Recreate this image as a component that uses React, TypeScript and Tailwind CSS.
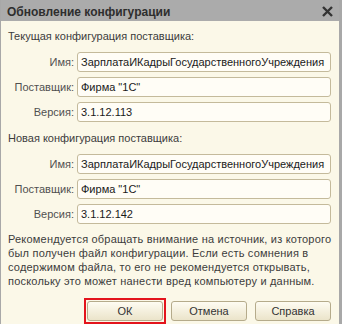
const font = { fontFamily: '"Liberation Sans", Arial, sans-serif' };

interface Field {
  label: string;
  value: string;
}

const current: Field[] = [
  { label: "Имя:", value: "ЗарплатаИКадрыГосударственногоУчреждения" },
  { label: "Поставщик:", value: 'Фирма "1С"' },
  { label: "Версия:", value: "3.1.12.113" },
];

const next: Field[] = [
  { label: "Имя:", value: "ЗарплатаИКадрыГосударственногоУчреждения" },
  { label: "Поставщик:", value: 'Фирма "1С"' },
  { label: "Версия:", value: "3.1.12.142" },
];

const notice = [
  "Рекомендуется обращать внимание на источник, из которого",
  "был получен файл конфигурации. Если есть сомнения в",
  "содержимом файла, то его не рекомендуется открывать,",
  "поскольку это может нанести вред компьютеру и данным.",
];

function FieldGroup({ title, fields }: { title: string; fields: Field[] }) {
  return (
    <div className="flex flex-col">
      <div className="h-[16px] text-[11px] leading-[16px] text-[#3c3c3c]">{title}</div>
      <div className="mt-[8px] grid grid-cols-[66px_1fr] gap-x-[3px] gap-y-[5px]">
        {fields.map((f) => (
          <div key={f.label} className="contents">
            <span className="flex h-[20px] items-center justify-end text-[11px] text-[#505050]">
              {f.label}
            </span>
            <span className="flex h-[20px] items-center overflow-hidden whitespace-nowrap rounded-[3px] border border-[#c4ba9b] bg-[#fffdf6] pl-[3px] text-[11px] text-[#1a1a1a]">
              {f.value}
            </span>
          </div>
        ))}
      </div>
    </div>
  );
}

function Button({ label }: { label: string }) {
  return (
    <button className="flex h-[20px] w-[76px] items-center justify-center rounded-[3px] border border-[#b5ab8b] bg-gradient-to-b from-[#fefcf2] to-[#ebe4ca] text-[11px] text-[#333]">
      {label}
    </button>
  );
}

export default function App() {
  return (
    <div
      style={font}
      className="flex h-[324px] w-[342px] flex-col overflow-hidden border-l border-r-[3px] border-[#a8a8a8] bg-[#fbf8e8]"
    >
      <div className="flex h-[21px] shrink-0 items-center justify-between bg-[#ababab] pl-[6px] pr-[6px]">
        <span className="pt-[3px] text-[12px] font-bold text-[#2e2e2e]">Обновление конфигурации</span>
        <svg width="11" height="11" viewBox="0 0 11 11" className="mt-[2px]">
          <path d="M1 1L10 10M10 1L1 10" stroke="#333" strokeWidth="2.4" />
        </svg>
      </div>
      <div className="flex flex-col pl-[7px] pr-[8px] pt-[7px]">
        <FieldGroup title="Текущая конфигурация поставщика:" fields={current} />
        <div className="mt-[8px]">
          <FieldGroup title="Новая конфигурация поставщика:" fields={next} />
        </div>
        <p className="mt-[8px] whitespace-nowrap text-[11px] leading-[14px] tracking-[0.2px] text-[#3c3c3c]">
          {notice.map((line) => (
            <span key={line} className="block">
              {line}
            </span>
          ))}
        </p>
        <div className="mt-[13px] flex justify-end gap-[8px]">
          {/* red frame is a highlight drawn over the default button */}
          <div className="-m-[3px] border-2 border-[#e3141c] p-[1px]">
            <Button label="ОК" />
          </div>
          <Button label="Отмена" />
          <Button label="Справка" />
        </div>
      </div>
    </div>
  );
}
